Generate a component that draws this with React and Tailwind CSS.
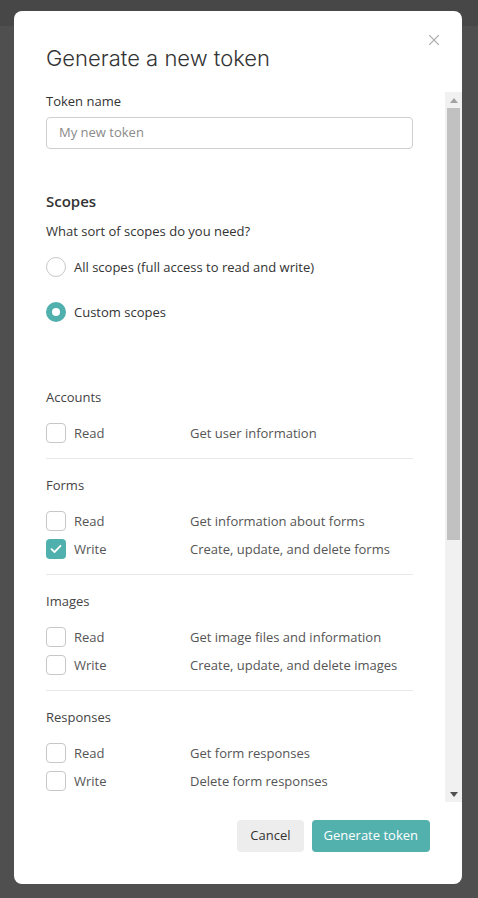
import { X } from 'lucide-react'

const FONT = { fontFamily: '"Open Sans", "Noto Sans", sans-serif' }

const SECTIONS = [
  { name: 'Accounts', rows: [{ label: 'Read', desc: 'Get user information' }] },
  {
    name: 'Forms',
    rows: [
      { label: 'Read', desc: 'Get information about forms' },
      { label: 'Write', desc: 'Create, update, and delete forms', checked: true },
    ],
  },
  {
    name: 'Images',
    rows: [
      { label: 'Read', desc: 'Get image files and information' },
      { label: 'Write', desc: 'Create, update, and delete images' },
    ],
  },
  {
    name: 'Responses',
    rows: [
      { label: 'Read', desc: 'Get form responses' },
      { label: 'Write', desc: 'Delete form responses' },
    ],
  },
]

function Checkbox({ checked }) {
  if (checked) {
    return (
      <span className="w-5 h-5 rounded-[4px] bg-[#4fb0ad] flex items-center justify-center shrink-0">
        <svg width="12" height="10" viewBox="0 0 12 10" fill="none">
          <path d="M1.5 5.2L4.5 8L10.5 1.8" stroke="white" strokeWidth="1.8" strokeLinecap="round" strokeLinejoin="round" />
        </svg>
      </span>
    )
  }
  return <span className="w-5 h-5 rounded-[4px] border border-[#c7c7c7] bg-white shrink-0" />
}

function Radio({ checked, children }) {
  return (
    <div className="flex items-center h-5">
      {checked ? (
        <span className="w-5 h-5 rounded-full bg-[#4fb0ad] flex items-center justify-center shrink-0">
          <span className="w-2 h-2 rounded-full bg-white" />
        </span>
      ) : (
        <span className="w-5 h-5 rounded-full border border-[#c7c7c7] shrink-0" />
      )}
      <span className="ml-2 text-[13px] text-[#333] leading-[18px]">{children}</span>
    </div>
  )
}

function Section({ section, first }) {
  return (
    <div className={first ? '' : 'border-t border-[#e8e8e8] pt-[17px]'}>
      <p className="text-[13px] text-[#444] leading-[18px]">{section.name}</p>
      <div className="mt-[17px] space-y-2 pb-[15px]">
        {section.rows.map(r => (
          <div key={r.label} className="flex items-center h-5">
            <Checkbox checked={r.checked} />
            <span className="ml-2 w-[116px] text-[13px] text-[#555] leading-[18px]">{r.label}</span>
            <span className="text-[13px] text-[#555] leading-[18px]">{r.desc}</span>
          </div>
        ))}
      </div>
    </div>
  )
}

export default function App() {
  return (
    <div className="relative h-[898px] w-full bg-[#4f4f4f] overflow-hidden" style={FONT}>
      <div className="h-[26px] bg-[#474747]" />

      {/* modal */}
      <div className="absolute left-[14px] top-[11px] w-[448px] h-[873px] bg-white rounded-[8px] flex flex-col overflow-hidden">
        <button className="absolute right-[19px] top-[20px] text-[#b0b0b0]">
          <X size={18} strokeWidth={1.5} />
        </button>

        <div className="h-[81px] pl-8 pt-[33px]">
          <h1 className="text-[22px] font-light text-[#333] leading-[28px]" style={{ fontFamily: 'Inter, "Open Sans", sans-serif' }}>
            Generate a new token
          </h1>
        </div>

        <div className="flex h-[710px]">
          <div className="flex-1 overflow-hidden pl-8 pr-8">
            <label className="block text-[13px] text-[#333] leading-[18px]">Token name</label>
            <div className="mt-[7px] h-8 border border-[#cfcfcf] rounded-[4px] flex items-center px-3">
              <span className="text-[13px] text-[#8a8a8a]">My new token</span>
            </div>

            <p className="mt-[41px] text-[15px] font-semibold text-[#333] leading-[22px]">Scopes</p>
            <p className="mt-[10px] text-[13px] text-[#333] leading-[18px]">What sort of scopes do you need?</p>
            <div className="mt-[17px] space-y-[25px]">
              <Radio>All scopes (full access to read and write)</Radio>
              <Radio checked>Custom scopes</Radio>
            </div>

            <div className="mt-[66px]">
              {SECTIONS.map((s, i) => (
                <Section key={s.name} section={s} first={i === 0} />
              ))}
            </div>
          </div>

          {/* scrollbar */}
          <div className="w-[17px] bg-[#f1f1f1] flex flex-col items-center">
            <div className="h-4 flex items-center justify-center">
              <svg width="8" height="5" viewBox="0 0 8 5"><path d="M4 0L8 5H0z" fill="#a3a3a3" /></svg>
            </div>
            <div className="w-[13px] h-[432px] bg-[#c1c1c1]" />
            <div className="flex-1" />
            <div className="h-4 flex items-center justify-center">
              <svg width="8" height="5" viewBox="0 0 8 5"><path d="M0 0H8L4 5z" fill="#505050" /></svg>
            </div>
          </div>
        </div>

        <div className="flex justify-end gap-2 pt-[18px] pr-8">
          <button className="h-8 px-[13px] rounded-[4px] bg-[#ededed] text-[13px] text-[#333]">Cancel</button>
          <button className="h-8 px-[12px] rounded-[4px] bg-[#52b0ad] text-[13px] text-white">Generate token</button>
        </div>
      </div>
    </div>
  )
}
